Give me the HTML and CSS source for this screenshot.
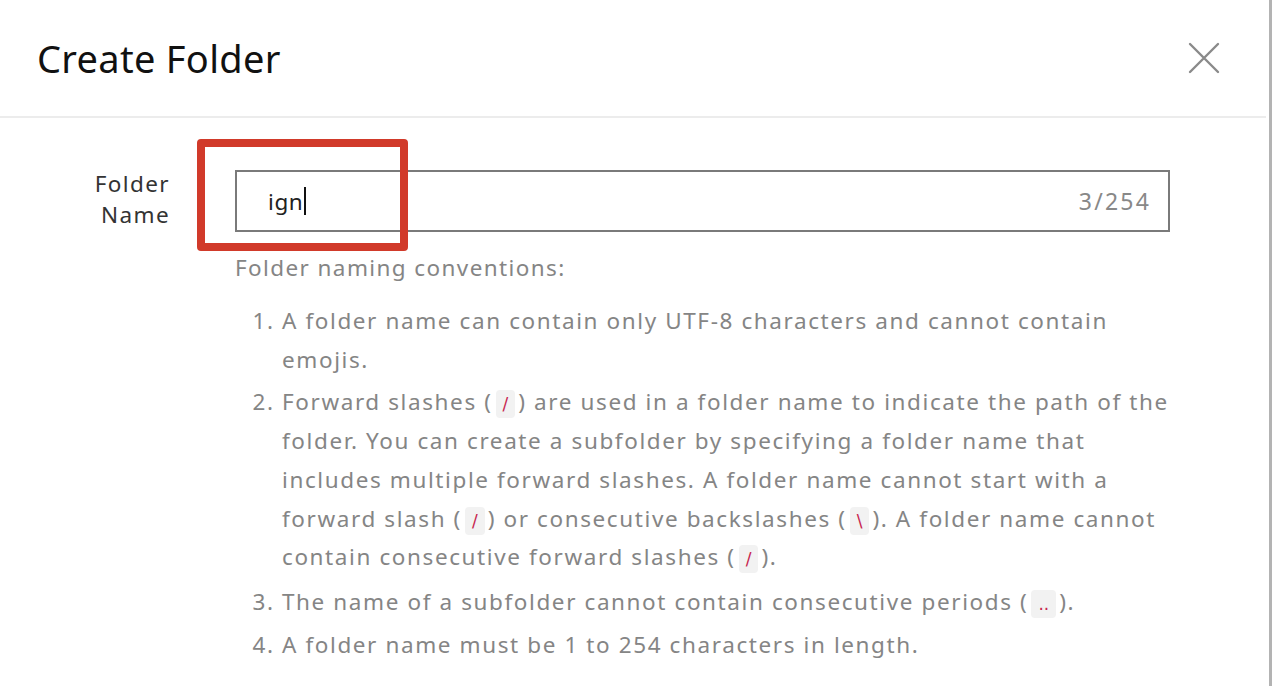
FILE: index.html
```html
<!DOCTYPE html>
<html>
<head>
<meta charset="utf-8">
<link rel="stylesheet" href="styles.css">
</head>
<body>
<div class="dialog">
  <div class="header">
    <h1 class="title">Create Folder</h1>
    <button class="close" aria-label="Close">
      <svg width="32" height="32" viewBox="0 0 32 32"><path d="M2 2 L30 30 M30 2 L2 30" stroke="#8a8a8a" stroke-width="2.4" fill="none" stroke-linecap="round"/></svg>
    </button>
  </div>
  <div class="body">
    <div class="row">
      <label class="label">Folder<br>Name</label>
      <div class="field">
        <div class="input-wrap">
          <div class="input"><span class="value">ign</span><span class="caret"></span></div>
          <span class="count">3/254</span>
          <div class="highlight"></div>
        </div>
        <div class="help">
          <p class="help-title">Folder naming conventions:</p>
          <ol class="rules">
            <li>A folder name can contain only UTF-8 characters and cannot contain emojis.</li>
            <li class="long">Forward slashes (<code>/</code>) are used in a folder name to indicate the path of the folder. You can create a subfolder by specifying a folder name that includes multiple forward slashes. A folder name cannot start with a forward slash (<code>/</code>) or consecutive backslashes (<code>\</code>). A folder name cannot contain consecutive forward slashes (<code>/</code>).</li>
            <li>The name of a subfolder cannot contain consecutive periods (<code>..</code>).</li>
            <li>A folder name must be 1 to 254 characters in length.</li>
          </ol>
        </div>
      </div>
    </div>
  </div>
</div>
</body>
</html>
```
FILE: styles.css
```css
* { box-sizing: border-box; }
html, body { margin: 0; padding: 0; background: #fff; }
body {
  font-family: "Noto Sans", "Liberation Sans", sans-serif;
  height: 686px;
  overflow: hidden;
}
.dialog {
  width: 1272px;
  height: 686px;
  border-right: 3px solid #b3b3b3;
}
.header {
  height: 118px;
  border-bottom: 2px solid #ececec;
  margin-right: 3px;
  display: flex;
  align-items: center;
  justify-content: space-between;
  padding: 0 46px 0 37px;
}
.title {
  margin: 0;
  font-weight: 400;
  font-size: 38px;
  color: #111;
  letter-spacing: 0.3px;
}
.close {
  border: 0;
  background: none;
  padding: 0;
  width: 32px;
  height: 32px;
  display: flex;
}
.body { padding-top: 52px; }
.row { display: flex; }
.label {
  width: 170px;
  text-align: right;
  font-size: 22.5px;
  letter-spacing: 1.4px;
  line-height: 31px;
  color: #333;
  margin-top: -2px;
}
.field { margin-left: 65px; width: 935px; }
.input-wrap { position: relative; }
.input {
  height: 62px;
  border: 2px solid #7a7a7a;
  display: flex;
  align-items: center;
  padding-left: 31px;
  font-size: 22.5px;
  letter-spacing: 0.6px;
  color: #222;
}
.caret {
  display: inline-block;
  width: 1.5px;
  height: 28px;
  background: #111;
  margin-left: 1px;
}
.count {
  position: absolute;
  right: 19px;
  top: 15px;
  font-size: 23px;
  letter-spacing: 2.2px;
  color: #888;
}
.highlight {
  position: absolute;
  left: -38px;
  top: -31px;
  width: 211px;
  height: 112px;
  border: 8px solid #d13a2a;
  border-radius: 4px;
}
.help { color: #858585; font-size: 22.5px; letter-spacing: 1.6px; }
.help-title { margin: 20px 0 0; line-height: 32px; letter-spacing: 1.4px; }
.rules {
  margin: 18px 0 0;
  padding-left: 47px;
  line-height: 38.7px;
}
.rules li { margin-bottom: 4px; }
.rules li.long { margin-bottom: 6px; }
code {
  font-family: "DejaVu Sans", sans-serif;
  font-size: 17px;
  line-height: 1;
  letter-spacing: 0;
  color: #c7254e;
  background: #f2f2f2;
  border-radius: 4px;
  padding: 4px 7px;
  margin: 0 3px;
}
```
